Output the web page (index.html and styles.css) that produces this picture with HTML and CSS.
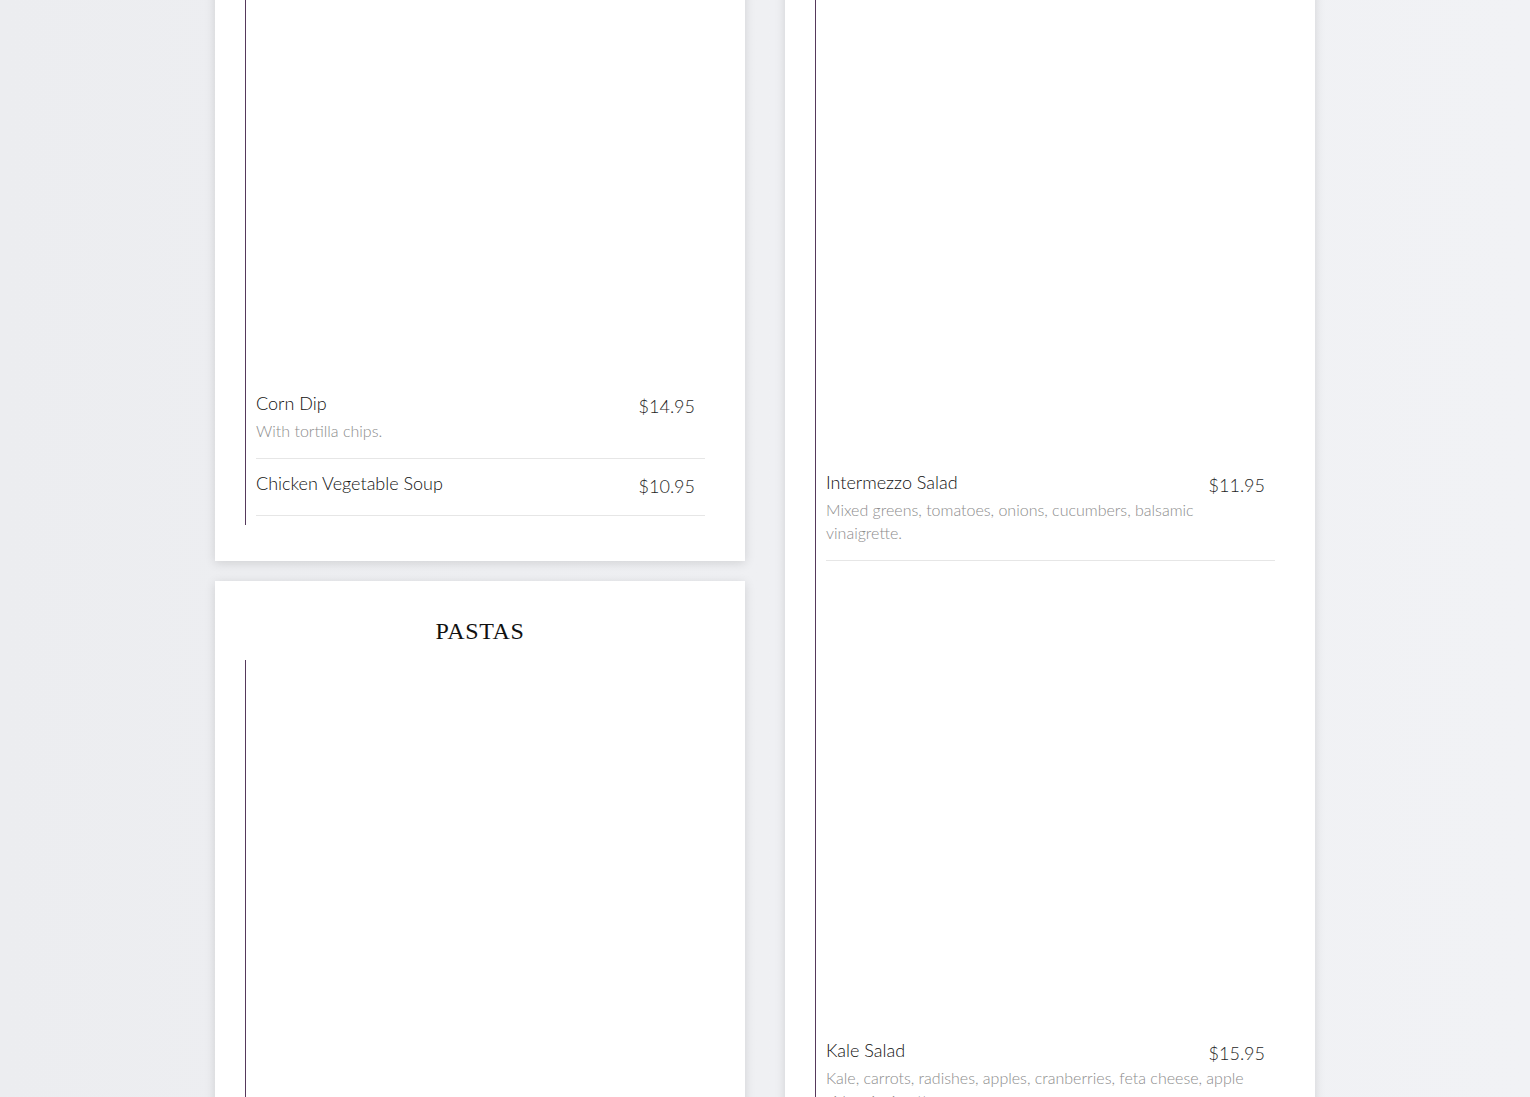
FILE: index.html
```html
<!DOCTYPE html>
<html>
	<head>
		<meta charset="utf-8">
		<title>Menu</title>
		<link rel="stylesheet" href="styles.css">
	</head>
	<body>
		<div class="menu">
			<div class="col col-left">
				<div class="card">
					<ul class="dishes">
						<li class="dish">
							<div class="dish-img"></div>
							<div class="dish-head">
								<h3 class="dish-name">Corn Dip</h3>
								<span class="dish-price">$14.95</span>
							</div>
							<p class="dish-desc">With tortilla chips.</p>
						</li>
						<li class="dish">
							<div class="dish-head">
								<h3 class="dish-name">Chicken Vegetable Soup</h3>
								<span class="dish-price">$10.95</span>
							</div>
						</li>
					</ul>
				</div>
				<div class="card">
					<h2 class="card-title">PASTAS</h2>
					<ul class="dishes">
						<li class="dish">
							<div class="dish-img"></div>
						</li>
					</ul>
				</div>
			</div>
			<div class="col col-right">
				<div class="card">
					<ul class="dishes">
						<li class="dish">
							<div class="dish-img"></div>
							<div class="dish-head">
								<h3 class="dish-name">Intermezzo Salad</h3>
								<span class="dish-price">$11.95</span>
							</div>
							<p class="dish-desc">Mixed greens, tomatoes, onions, cucumbers, balsamic vinaigrette.</p>
						</li>
						<li class="dish">
							<div class="dish-img"></div>
							<div class="dish-head">
								<h3 class="dish-name">Kale Salad</h3>
								<span class="dish-price">$15.95</span>
							</div>
							<p class="dish-desc">Kale, carrots, radishes, apples, cranberries, feta cheese, apple cider vinaigrette.</p>
						</li>
					</ul>
				</div>
			</div>
		</div>
	</body>
</html>
```

FILE: styles.css
```css
*{
	padding: 0;
	margin: 0;
	box-sizing: border-box;
}
ul {
	list-style: none;
}
html, body {
	width: 100%;
	height: 100%;
	overflow: hidden;
}
body {
	background: linear-gradient(90deg, #ecedf0 0%, #eff0f3 50%, #f1f2f5 100%);
	font-family: Lato, "Liberation Sans", sans-serif;
	font-weight: 300;
	color: #222;
}
.menu {
	width: 1100px;
	margin: 0 auto;
	display: flex;
	gap: 40px;
	align-items: flex-start;
}
.col {
	flex: 1;
	display: flex;
	flex-direction: column;
	gap: 20px;
}
/* the page is scrolled: the first cards begin above the window */
.col-left {
	margin-top: -122px;
}
.col-right {
	margin-top: -43px;
}
.card {
	background: #fff;
	padding: 36px 30px;
	box-shadow: 0 2px 10px rgba(0, 0, 0, 0.13);
}
.card-title {
	font-family: "Liberation Serif", serif;
	font-weight: 400;
	font-size: 24px;
	line-height: 28px;
	letter-spacing: 0.6px;
	text-align: center;
	color: #111;
	margin-bottom: 15px;
}
.dishes {
	border-left: 1px solid #56395c;
	padding: 0 10px 9px 0;
}
.dish {
	margin-left: 10px;
	padding: 11px 0 15px 0;
	border-bottom: 1px solid #e6e6e6;
}
.dish-img {
	width: 100%;
	aspect-ratio: 1;
	margin-bottom: 16px;
}
.dish-head {
	display: flex;
	justify-content: space-between;
	align-items: flex-start;
	padding-right: 10px;
}
.dish-name {
	font-weight: 300;
	font-size: 18px;
	line-height: 27px;
	color: #111;
}
.dish-price {
	font-size: 18px;
	line-height: 28px;
	padding-top: 2px;
	color: #1e1e1e;
}
.dish-desc {
	font-size: 16px;
	line-height: 23px;
	margin: -1px 0 1px;
	padding-right: 10px;
	color: #8c8c8c;
}
```
